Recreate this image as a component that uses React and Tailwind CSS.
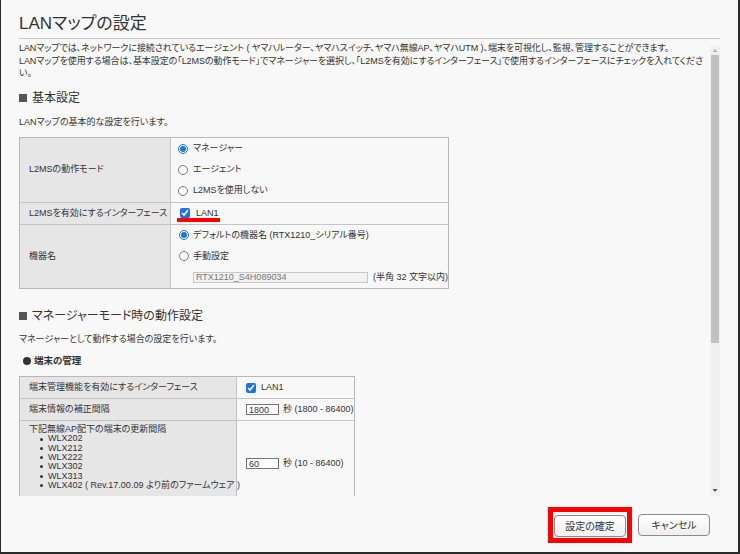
import React from 'react';

const font = "font-['Liberation_Sans','Noto_Sans_CJK_JP',sans-serif] [font-feature-settings:'palt']";

function Radio({ checked }) {
  return (
    <input
      type="radio"
      defaultChecked={checked}
      className="m-0 w-[10px] h-[10px] accent-[#1a73e8] shrink-0"
    />
  );
}

function Check() {
  return (
    <input
      type="checkbox"
      defaultChecked
      className="m-0 w-[10px] h-[10px] accent-[#1a73e8] shrink-0"
    />
  );
}

function Heading({ children }) {
  return (
    <div className="flex items-center h-[16px] text-[12px] text-[#333]">
      <span className="w-[8px] h-[8px] bg-[#555] mr-[5px]" />
      {children}
    </div>
  );
}

export default function App() {
  const models = ['WLX202', 'WLX212', 'WLX222', 'WLX302', 'WLX313', 'WLX402 ( Rev.17.00.09 より前のファームウェア )'];

  return (
    <div className={`w-[740px] h-[554px] bg-[#f8f8f8] border-l border-r-2 border-b-2 border-[#2a2a2a] flex flex-col text-[#333] ${font}`}>
      {/* Header */}
      <div className="px-[18px] pt-[12px]">
        <h1 className="text-[17px] leading-[24px] pb-[2px] border-b border-[#c8c8c8] font-normal">LANマップの設定</h1>
      </div>

      {/* Body */}
      <div className="flex flex-1 min-h-0 pl-[18px] pr-[18px]">
        <div className="flex-1 overflow-hidden pt-[3px] text-[9px] whitespace-nowrap">
          <div className="leading-[12.5px] tracking-[-0.07px]">
            <div>LANマップでは、ネットワークに接続されているエージェント ( ヤマハルーター、ヤマハスイッチ、ヤマハ無線AP、ヤマハUTM )、端末を可視化し、監視、管理することができます。</div>
            <div>LANマップを使用する場合は、基本設定の「L2MSの動作モード」でマネージャーを選択し、「L2MSを有効にするインターフェース」で使用するインターフェースにチェックを入れてくださ</div>
            <div>い。</div>
          </div>

          <div className="mt-[10px]">
            <Heading>基本設定</Heading>
          </div>
          <div className="mt-[10px] leading-[12.5px]">LANマップの基本的な設定を行います。</div>

          {/* Table 1 */}
          <table className="mt-[9px] w-[430px] border-collapse border border-[#b8b8b8] table-fixed">
            <tbody>
              <tr className="border-b border-[#c4c4c4]">
                <td className="w-[151px] bg-[#e6e6e6] pl-[9px] border-r border-[#c4c4c4]">L2MSの動作モード</td>
                <td className="pl-[7px] py-0">
                  {[['マネージャー', true], ['エージェント', false], ['L2MSを使用しない', false]].map(([t, c]) => (
                    <div key={t} className="flex items-center gap-[5px] h-[21.3px]">
                      <Radio checked={c} />
                      <span>{t}</span>
                    </div>
                  ))}
                </td>
              </tr>
              <tr className="border-b border-[#c4c4c4]">
                <td className="bg-[#e6e6e6] pl-[9px] border-r border-[#c4c4c4] h-[22px]">L2MSを有効にするインターフェース</td>
                <td className="pl-[9px]">
                  <div className="relative flex items-center gap-[6px] h-[10px]">
                    <Check />
                    <span>LAN1</span>
                    <span className="absolute left-[-3px] top-[10px] w-[43px] h-[4px] bg-[#f00]" />
                  </div>
                </td>
              </tr>
              <tr>
                <td className="bg-[#e6e6e6] pl-[9px] border-r border-[#c4c4c4]">機器名</td>
                <td className="pl-[8px]">
                  <div className="flex items-center gap-[4px] h-[21px]">
                    <Radio checked />
                    <span>デフォルトの機器名 (RTX1210_シリアル番号)</span>
                  </div>
                  <div className="flex items-center gap-[4px] h-[21px]">
                    <Radio checked={false} />
                    <span>手動設定</span>
                  </div>
                  <div className="flex items-center h-[21px] pl-[14px]">
                    <input
                      type="text"
                      disabled
                      defaultValue="RTX1210_S4H089034"
                      className="w-[175px] h-[11px] px-[2px] text-[9px] leading-[9px] text-[#777] bg-[#f2f2f2] border border-[#c8c8c8] outline-none"
                    />
                    <span className="ml-[5px]">(半角 32 文字以内)</span>
                  </div>
                </td>
              </tr>
            </tbody>
          </table>

          <div className="mt-[19px]">
            <Heading>マネージャーモード時の動作設定</Heading>
          </div>
          <div className="mt-[9px] leading-[12.5px]">マネージャーとして動作する場合の設定を行います。</div>

          <div className="mt-[9px] flex items-center h-[14px] pl-[4px] font-bold text-[9.5px]">
            <span className="w-[8px] h-[8px] rounded-full bg-[#333] mr-[3px]" />
            端末の管理
          </div>

          {/* Table 2 */}
          <table className="mt-[8px] w-[336px] border-collapse border border-[#b8b8b8] table-fixed">
            <tbody>
              <tr className="border-b border-[#c4c4c4]">
                <td className="w-[217px] bg-[#e6e6e6] pl-[9px] border-r border-[#c4c4c4] h-[22px]">端末管理機能を有効にするインターフェース</td>
                <td className="pl-[9px]">
                  <div className="flex items-center gap-[5px]">
                    <Check />
                    <span>LAN1</span>
                  </div>
                </td>
              </tr>
              <tr className="border-b border-[#c4c4c4]">
                <td className="bg-[#e6e6e6] pl-[9px] border-r border-[#c4c4c4] h-[22px]">端末情報の補正間隔</td>
                <td className="pl-[9px]">
                  <div className="flex items-center">
                    <input
                      type="text"
                      defaultValue="1800"
                      className="w-[33px] h-[11px] px-[2px] text-[9px] leading-[9px] bg-white border border-[#767676] outline-none"
                    />
                    <span className="ml-[4px]">秒 (1800 - 86400)</span>
                  </div>
                </td>
              </tr>
              <tr>
                <td className="bg-[#e6e6e6] pl-[9px] border-r border-[#c4c4c4] pt-[3px] pb-[16px] align-top">
                  <div className="leading-[10px]">下記無線AP配下の端末の更新間隔</div>
                  <ul className="leading-[9.3px] pl-[11px]">
                    {models.map((m) => (
                      <li key={m} className="block">
                        <span className="inline-block w-[3px] h-[3px] rounded-full bg-[#333] mr-[5px] align-middle" />
                        {m}
                      </li>
                    ))}
                  </ul>
                </td>
                <td className="pl-[9px] align-middle">
                  <div className="flex items-center">
                    <input
                      type="text"
                      defaultValue="60"
                      className="w-[33px] h-[11px] px-[2px] text-[9px] leading-[9px] bg-white border border-[#767676] outline-none"
                    />
                    <span className="ml-[4px]">秒 (10 - 86400)</span>
                  </div>
                </td>
              </tr>
            </tbody>
          </table>
        </div>

        {/* Scrollbar */}
        <div className="w-[10px] mt-[7px] ml-[7px] bg-[#f0f0f0] flex flex-col items-center">
          <svg width="6" height="5" viewBox="0 0 6 5" className="mt-[2px]">
            <path d="M3 1 L5.5 4 L0.5 4 Z" fill="#b5b5b5" />
          </svg>
          <div className="w-[8px] h-[288px] mt-[2px] bg-[#c1c1c1]" />
          <div className="flex-1" />
          <svg width="6" height="5" viewBox="0 0 6 5" className="mb-[3px]">
            <path d="M0.5 1 L5.5 1 L3 4 Z" fill="#555" />
          </svg>
        </div>
      </div>

      {/* Footer */}
      <div className="h-[56px] flex items-center justify-end pr-[28px] pt-[2px] shrink-0">
        <div className="border-[5px] border-[#f00] p-[1px]">
          <button className="w-[72px] h-[22px] rounded-[4px] border border-[#8c8c8c] bg-gradient-to-b from-white to-[#efefef] text-[10px] text-[#333]">
            設定の確定
          </button>
        </div>
        <button className="ml-[6px] w-[72px] h-[22px] rounded-[4px] border border-[#8c8c8c] bg-gradient-to-b from-white to-[#efefef] text-[10px] text-[#333]">
          キャンセル
        </button>
      </div>
    </div>
  );
}
